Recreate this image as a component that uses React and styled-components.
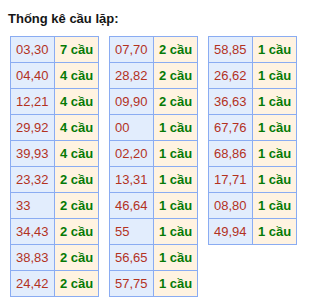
import React from 'react'
import styled, { createGlobalStyle } from 'styled-components'

const GlobalStyle = createGlobalStyle`
  body {
    margin: 0;
    background: #ffffff;
    font-family: "Liberation Sans", Arial, sans-serif;
  }
`

const columns = [
  [
    ['03,30', 7], ['04,40', 4], ['12,21', 4], ['29,92', 4], ['39,93', 4],
    ['23,32', 2], ['33', 2], ['34,43', 2], ['38,83', 2], ['24,42', 2],
  ],
  [
    ['07,70', 2], ['28,82', 2], ['09,90', 2], ['00', 1], ['02,20', 1],
    ['13,31', 1], ['46,64', 1], ['55', 1], ['56,65', 1], ['57,75', 1],
  ],
  [
    ['58,85', 1], ['26,62', 1], ['36,63', 1], ['67,76', 1], ['68,86', 1],
    ['17,71', 1], ['08,80', 1], ['49,94', 1],
  ],
]

export default function App() {
  return (
    <Page>
      <GlobalStyle />
      <Title>Thống kê cầu lặp:</Title>
      <Tables>
        {columns.map((rows, i) => (
          <Table key={i}>
            <tbody>
              {rows.map(([pair, count]) => (
                <tr key={pair}>
                  <Pair>{pair}</Pair>
                  <Count>{count} cầu</Count>
                </tr>
              ))}
            </tbody>
          </Table>
        ))}
      </Tables>
    </Page>
  )
}

const Page = styled.div`
  padding: 8px;
`
const Title = styled.div`
  font-size: 13px;
  font-weight: bold;
  color: #151515;
  line-height: 16px;
  margin-top: 3px;
  height: 17px;
`
const Tables = styled.div`
  display: flex;
  align-items: flex-start;
  gap: 10px;
  margin-top: 8px;
  margin-left: 2px;
`
const Table = styled.table`
  border-collapse: collapse;
  width: 89px;
  table-layout: fixed;
  font-size: 13px;
`
const Cell = styled.td`
  border: 1px solid #8aacf2;
  height: 25px;
  padding: 0 0 0 5px;
  line-height: 25px;
  white-space: nowrap;
  box-sizing: border-box;
`
const Pair = styled(Cell)`
  background: #e2edfd;
  color: #b3321f;
`
const Count = styled(Cell)`
  background: #fff3e1;
  color: #067a06;
  font-weight: bold;
`
